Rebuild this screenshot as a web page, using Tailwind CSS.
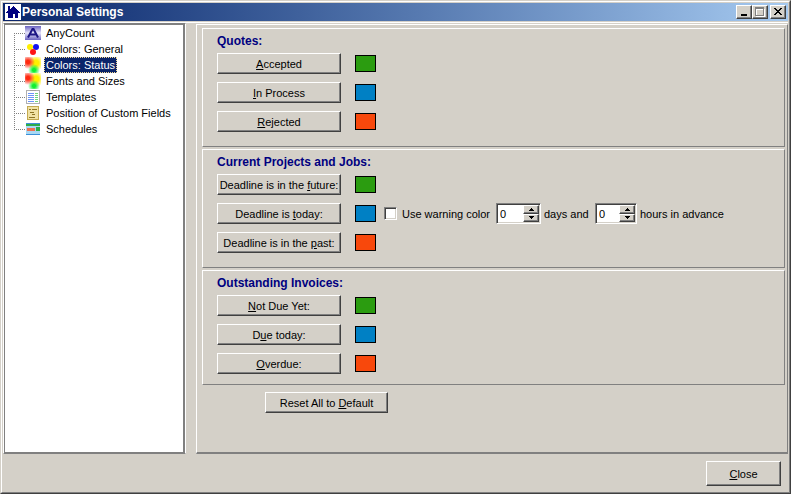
<!DOCTYPE html>
<html lang="en">
<head>
    <meta charset="UTF-8">
    <meta name="viewport" content="width=device-width, initial-scale=1.0">
    <title>Personal Settings</title>
    <script src="https://cdn.jsdelivr.net/npm/@tailwindcss/browser@4"></script>
    <style>
        body { font-family: "Liberation Sans", Arial, sans-serif; }
        /* Classic raised button */
        .btn {
            background: #d4d0c8;
            border: 1px solid;
            border-color: #fff #404040 #404040 #fff;
            box-shadow: inset -1px -1px 0 #808080;
        }
        .sunken {
            background: #fff;
            border: 1px solid;
            border-color: #808080 #fff #fff #808080;
            box-shadow: inset 1px 1px 0 #404040, inset -1px -1px 0 #d4d0c8;
        }
        .group-box {
            border: 1px solid;
            border-color: #fff #808080 #808080 #fff;
        }
        .tree-line {
            fill: none;
            stroke: #808080;
            stroke-dasharray: 1 1;
            shape-rendering: crispEdges;
        }
    </style>
</head>
<body class="h-screen bg-[#d4d0c8] text-[11px] leading-4 text-black">
    <svg class="absolute size-0">
        <defs>
            <radialGradient id="red"><stop offset=".25" stop-color="#ff2a10"/><stop offset="1" stop-color="#ff2a10" stop-opacity="0"/></radialGradient>
            <radialGradient id="yellow"><stop offset=".35" stop-color="#fff000"/><stop offset="1" stop-color="#fff000" stop-opacity="0"/></radialGradient>
            <radialGradient id="green"><stop offset=".25" stop-color="#10f030"/><stop offset="1" stop-color="#10f030" stop-opacity="0"/></radialGradient>
            <linearGradient id="violet" x2="0" y2="1"><stop stop-color="#6a62c0"/><stop offset=".5" stop-color="#e6e4fa"/><stop offset="1" stop-color="#6a62c0"/></linearGradient>
            <symbol id="blobs" viewBox="0 0 16 16">
                <circle cx="11" cy="6" r="8" fill="url(#yellow)"/>
                <circle cx="3" cy="5" r="7" fill="url(#red)"/>
                <circle cx="9" cy="13" r="6" fill="url(#green)"/>
            </symbol>
        </defs>
    </svg>

    <div class="flex h-full flex-col border border-t-[#d4d0c8] border-l-[#d4d0c8] border-r-[#404040] border-b-[#404040]">
        <div class="flex min-h-0 grow flex-col border border-t-white border-l-white border-r-[#808080] border-b-[#808080] px-px pt-px">
            <header class="flex h-[18px] shrink-0 items-center bg-linear-to-r from-[#0a246a] to-[#a6caf0] px-[2px] text-white">
                <svg class="size-4" viewBox="0 0 16 16" shape-rendering="crispEdges">
                    <path fill="#fff" d="M0 0h16v16H0z"/>
                    <path fill="#000080" d="M3 2h2v3h1V4h1V3h1V2h1v1h1v1h1v1h1v1h1v1h1v1h1v1h-2v5h-3v-4H8v4H3V9H1V8h1V7h1z"/>
                </svg>
                <h1 class="ml-px grow text-[12px] font-bold">Personal Settings</h1>
                <button class="btn flex h-[14px] w-4 items-center justify-center" aria-label="Minimize">
                    <svg class="h-[10px] w-3" viewBox="0 0 12 10" shape-rendering="crispEdges"><path d="M3 7h6v2H3z"/></svg>
                </button>
                <button class="btn flex h-[14px] w-4 items-center justify-center" aria-label="Maximize" disabled>
                    <svg class="h-[10px] w-3" viewBox="0 0 12 10" shape-rendering="crispEdges">
                        <path fill="none" stroke="#fff" d="M2.500 2.500h8v7h-8z"/>
                        <path fill="none" stroke="#808080" d="M1.500 .5h8v8h-8zM2 1.500h7"/>
                    </svg>
                </button>
                <button class="btn ml-[2px] flex h-[14px] w-4 items-center justify-center" aria-label="Close window">
                    <svg class="h-[10px] w-3" viewBox="0 0 12 10" shape-rendering="crispEdges">
                        <path d="M2 1h2v1h1v1h2V2h1V1h2v1H9v1H8v1H7v1h1v1h1v1h1v1H8V7H7V6H5v1H4v1H2V7h1V6h1V5h1V4H4V3H3V2H2z"/>
                    </svg>
                </button>
            </header>

            <main class="mt-px flex min-h-0 grow border-t border-t-white">
                <nav class="w-[183px] shrink-0 border border-t-[#808080] border-l-white border-r-white border-b-[#808080]">
                    <ul class="h-full border border-[#808080] border-r-2 bg-white px-px whitespace-nowrap">
                        <li class="flex h-4 items-center">
                            <svg class="ml-2 h-4 w-[11px]" viewBox="0 0 11 16"><path class="tree-line" d="M.5 8v8M0 8.500h11"/></svg>
                            <svg class="size-4" viewBox="0 0 16 16"><path fill="url(#violet)" d="M0 1h16v14H0z"/><path fill="none" stroke="#1c1484" stroke-width="2" d="M3 12.500L7.500 4h1L13 12.500M5 9.500h6"/></svg>
                            <a href="#" class="ml-[3px] border border-transparent px-px leading-[14px]">AnyCount</a>
                        </li>
                        <li class="flex h-4 items-center">
                            <svg class="ml-2 h-4 w-[11px]" viewBox="0 0 11 16"><path class="tree-line" d="M.5 0v16M0 8.500h11"/></svg>
                            <svg class="size-4" viewBox="0 0 16 16"><circle cx="5" cy="6" r="3" fill="#ffee00"/><circle cx="11" cy="6" r="3" fill="#1414f0"/><circle cx="8" cy="11" r="3" fill="#ff1414"/></svg>
                            <a href="#" class="ml-[3px] border border-transparent px-px leading-[14px]">Colors: General</a>
                        </li>
                        <li class="flex h-4 items-center">
                            <svg class="ml-2 h-4 w-[11px]" viewBox="0 0 11 16"><path class="tree-line" d="M.5 0v16M0 8.500h11"/></svg>
                            <svg class="size-4"><use href="#blobs"/></svg>
                            <a href="#" aria-current="page" class="ml-[3px] border border-dotted border-[#f5db95] bg-[#0a246a] px-px leading-[14px] text-white">Colors: Status</a>
                        </li>
                        <li class="flex h-4 items-center">
                            <svg class="ml-2 h-4 w-[11px]" viewBox="0 0 11 16"><path class="tree-line" d="M.5 0v16M0 8.500h11"/></svg>
                            <svg class="size-4"><use href="#blobs"/></svg>
                            <a href="#" class="ml-[3px] border border-transparent px-px leading-[14px]">Fonts and Sizes</a>
                        </li>
                        <li class="flex h-4 items-center">
                            <svg class="ml-2 h-4 w-[11px]" viewBox="0 0 11 16"><path class="tree-line" d="M.5 0v16M0 8.500h11"/></svg>
                            <svg class="size-4" viewBox="0 0 16 16" shape-rendering="crispEdges">
                                <path fill="#fff" stroke="#b0b0b0" d="M1.500 1.500h13v13h-13z"/>
                                <path fill="#a0a0a0" d="M5 1h6v1H5z"/>
                                <path stroke="#6c94f8" d="M3 4.500h6M3 6.500h6M3 8.500h6M3 10.500h6M3 12.500h6"/>
                                <path stroke="#70d878" d="M10 4.500h3M10 6.500h3M10 8.500h3M10 10.500h3M10 12.500h3"/>
                            </svg>
                            <a href="#" class="ml-[3px] border border-transparent px-px leading-[14px]">Templates</a>
                        </li>
                        <li class="flex h-4 items-center">
                            <svg class="ml-2 h-4 w-[11px]" viewBox="0 0 11 16"><path class="tree-line" d="M.5 0v16M0 8.500h11"/></svg>
                            <svg class="size-4" viewBox="0 0 16 16" shape-rendering="crispEdges">
                                <path fill="#f0e2a4" stroke="#c4aa50" d="M2.500 1.500h11v13h-11z"/>
                                <path stroke="#8c7424" d="M7 4.500h5M5 7.500h4M7 9.500h3M4 12.500h6M4 4.500h2"/>
                            </svg>
                            <a href="#" class="ml-[3px] border border-transparent px-px leading-[14px]">Position of Custom Fields</a>
                        </li>
                        <li class="flex h-4 items-center">
                            <svg class="ml-2 h-4 w-[11px]" viewBox="0 0 11 16"><path class="tree-line" d="M.5 0v8M0 8.500h11"/></svg>
                            <svg class="size-4" viewBox="0 0 16 16" shape-rendering="crispEdges">
                                <path fill="#a8d8f4" d="M1 2h14v12H1z"/>
                                <path fill="#3c90d8" d="M1 2h14v1H1zM1 13h14v1H1z"/>
                                <path fill="#2cac48" d="M1 3h14v2H1zM11 6h4v4h-4z"/>
                                <path fill="#f07050" d="M2 7h8v3H2z"/>
                            </svg>
                            <a href="#" class="ml-[3px] border border-transparent px-px leading-[14px]">Schedules</a>
                        </li>
                    </ul>
                </nav>

                <div class="mt-px ml-[10px] min-w-0 grow border-t border-l border-r border-b-2 border-t-white border-l-white border-r-[#808080] border-b-[#808080] px-[2px] pt-[3px]">
                    <div class="ml-[3px] flex flex-col gap-[2px]">
                        <section class="group-box px-[14px] pt-1 pb-[14px]">
                            <h2 class="mb-1 text-[12px] leading-4 font-bold text-[#000080]">Quotes:</h2>
                            <div class="flex flex-col gap-2">
                                <div class="flex h-[21px] items-center gap-[14px]">
                                    <button class="btn h-full w-[124px]"><u>A</u>ccepted</button>
                                    <span class="h-[17px] w-[21px] border border-black bg-[#2b9c10]"></span>
                                </div>
                                <div class="flex h-[21px] items-center gap-[14px]">
                                    <button class="btn h-full w-[124px]"><u>I</u>n Process</button>
                                    <span class="h-[17px] w-[21px] border border-black bg-[#0080c4]"></span>
                                </div>
                                <div class="flex h-[21px] items-center gap-[14px]">
                                    <button class="btn h-full w-[124px]"><u>R</u>ejected</button>
                                    <span class="h-[17px] w-[21px] border border-black bg-[#f8480c]"></span>
                                </div>
                            </div>
                        </section>

                        <section class="group-box px-[14px] pt-1 pb-[14px]">
                            <h2 class="mb-1 text-[12px] leading-4 font-bold text-[#000080]">Current Projects and Jobs:</h2>
                            <div class="flex flex-col gap-2">
                                <div class="flex h-[21px] items-center gap-[14px]">
                                    <button class="btn h-full w-[124px]">Deadline is in the <u>f</u>uture:</button>
                                    <span class="h-[17px] w-[21px] border border-black bg-[#2b9c10]"></span>
                                </div>
                                <div class="flex h-[21px] items-center whitespace-nowrap">
                                    <button class="btn h-full w-[124px]">Deadline is <u>t</u>oday:</button>
                                    <span class="ml-[14px] h-[17px] w-[21px] border border-black bg-[#0080c4]"></span>
                                    <input type="checkbox" id="warn" class="sunken ml-2 size-[13px] appearance-none">
                                    <label for="warn" class="ml-[5px] w-[94px]">Use warning color</label>
                                    <span class="sunken flex h-full w-[45px] p-px">
                                        <input type="text" id="days" value="0" class="min-w-0 grow pl-[2px] outline-none">
                                        <span class="flex w-4 shrink-0 flex-col">
                                            <button class="btn flex grow items-center justify-center" aria-label="More days"><svg class="h-[3px] w-[5px]" viewBox="0 0 5 3" shape-rendering="crispEdges"><path d="M2 0h1v1h1v1h1v1H0V2h1V1h1z"/></svg></button>
                                            <button class="btn flex grow items-center justify-center" aria-label="Fewer days"><svg class="h-[3px] w-[5px]" viewBox="0 0 5 3" shape-rendering="crispEdges"><path d="M0 0h5v1H4v1H3v1H2V2H1V1H0z"/></svg></button>
                                        </span>
                                    </span>
                                    <label for="days" class="ml-[3px] w-[51px]">days and</label>
                                    <span class="sunken flex h-full w-[42px] p-px">
                                        <input type="text" id="hours" value="0" class="min-w-0 grow pl-[2px] outline-none">
                                        <span class="flex w-4 shrink-0 flex-col">
                                            <button class="btn flex grow items-center justify-center" aria-label="More hours"><svg class="h-[3px] w-[5px]" viewBox="0 0 5 3" shape-rendering="crispEdges"><path d="M2 0h1v1h1v1h1v1H0V2h1V1h1z"/></svg></button>
                                            <button class="btn flex grow items-center justify-center" aria-label="Fewer hours"><svg class="h-[3px] w-[5px]" viewBox="0 0 5 3" shape-rendering="crispEdges"><path d="M0 0h5v1H4v1H3v1H2V2H1V1H0z"/></svg></button>
                                        </span>
                                    </span>
                                    <label for="hours" class="ml-[3px]">hours in advance</label>
                                </div>
                                <div class="flex h-[21px] items-center gap-[14px]">
                                    <button class="btn h-full w-[124px]">Deadline is in the <u>p</u>ast:</button>
                                    <span class="h-[17px] w-[21px] border border-black bg-[#f8480c]"></span>
                                </div>
                            </div>
                        </section>

                        <section class="group-box px-[14px] pt-1 pb-[10px]">
                            <h2 class="mb-1 text-[12px] leading-4 font-bold text-[#000080]">Outstanding Invoices:</h2>
                            <div class="flex flex-col gap-2">
                                <div class="flex h-[21px] items-center gap-[14px]">
                                    <button class="btn h-full w-[124px]"><u>N</u>ot Due Yet:</button>
                                    <span class="h-[17px] w-[21px] border border-black bg-[#2b9c10]"></span>
                                </div>
                                <div class="flex h-[21px] items-center gap-[14px]">
                                    <button class="btn h-full w-[124px]">D<u>u</u>e today:</button>
                                    <span class="h-[17px] w-[21px] border border-black bg-[#0080c4]"></span>
                                </div>
                                <div class="flex h-[21px] items-center gap-[14px]">
                                    <button class="btn h-full w-[124px]"><u>O</u>verdue:</button>
                                    <span class="h-[17px] w-[21px] border border-black bg-[#f8480c]"></span>
                                </div>
                            </div>
                        </section>
                    </div>
                    <button class="btn mt-[7px] ml-[66px] h-[21px] w-[123px]">Reset All to <u>D</u>efault</button>
                </div>
            </main>

            <footer class="flex shrink-0 justify-end pt-[7px] pr-[7px] pb-[6px]">
                <button class="btn h-[25px] w-[75px]"><u>C</u>lose</button>
            </footer>
        </div>
    </div>
</body>
</html>
